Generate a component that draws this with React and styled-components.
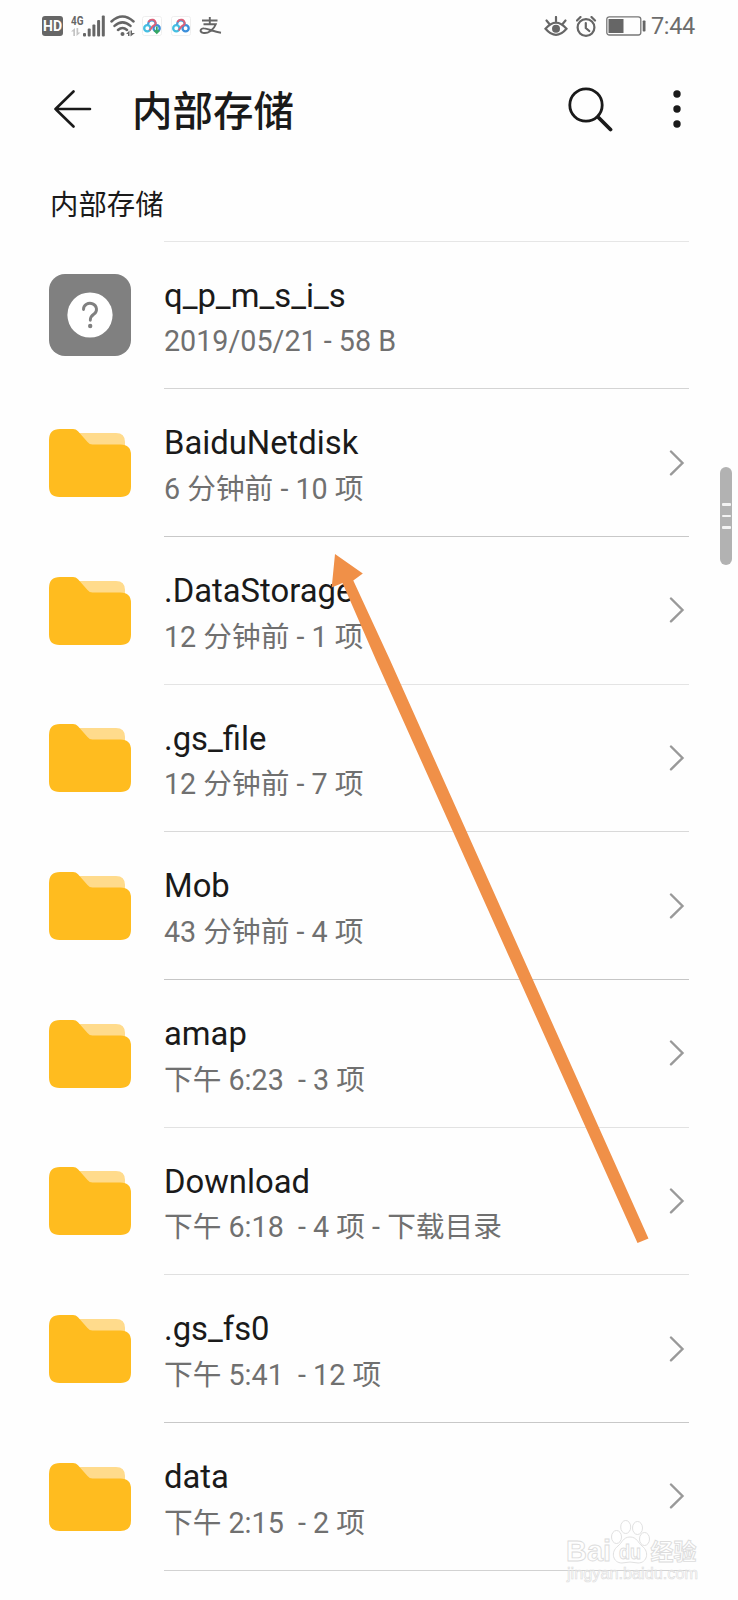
import React from "react";
import styled, { createGlobalStyle } from "styled-components";

const GlobalStyle = createGlobalStyle`
  body {
    margin: 0;
    background: #fefefe;
    font-family: Roboto, "Noto Sans CJK SC", sans-serif;
  }
`;

const Screen = styled("main")`
  position: relative;
  display: flex;
  flex-direction: column;
  width: 738px;
  height: 1600px;
  overflow: hidden;
  background: #fefefe;
  color: #1a1a1a;
`;

const StatusBar = styled("header")`
  display: flex;
  justify-content: space-between;
  align-items: center;
  height: 52px;
  padding: 0 43px 0 42px;
  box-sizing: border-box;
  color: #666;
`;

const StatusGroup = styled("div")`
  display: flex;
  align-items: center;
  gap: ${props => props.gap}px;
`;

const HdBadge = styled("span")`
  width: 21px;
  height: 20px;
  margin-right: 4px;
  border-radius: 3px;
  background: #666;
  color: white;
  font: 700 14px/21px Roboto, sans-serif;
  text-align: center;
`;

const WifiIcon = styled("svg")`
  margin-right: 2px;
`;

const NetdiskIcon = styled("svg")`
  margin-right: 4.5px;
`;

const Clock = styled("span")`
  margin-left: -3px;
  color: #6c6c6c;
  font-size: 23.5px;
  line-height: 28px;
  letter-spacing: -0.3px;
`;

const AppBar = styled("nav")`
  display: flex;
  align-items: center;
  height: 113px;
  padding: 0 57px 0 54px;
`;

const Title = styled("h1")`
  flex: 1;
  margin: 0 0 0 40px;
  padding-top: 7px;
  font-size: 40.5px;
  font-weight: 500;
  line-height: 56px;
`;

const MoreIcon = styled("svg")`
  margin-left: 60px;
`;

const SectionLabel = styled("h2")`
  box-sizing: border-box;
  margin: 0;
  padding: 19.5px 0 0 50px;
  height: 75.5px;
  font-size: 28.4px;
  font-weight: 400;
  line-height: 41px;
`;

const List = styled("ul")`
  margin: 0;
  padding: 0 49px;
  list-style: none;
`;

const Row = styled("li")`
  display: flex;
  align-items: center;
  gap: 33px;
  height: 147.7px;
`;

const IconBox = styled("div")`
  display: flex;
  align-items: center;
  justify-content: center;
  width: 82px;
  height: 82px;
  margin-top: 1.6px;
  border-radius: 16px;
  background: ${props => (props.filled ? "#808080" : "transparent")};
`;

const RowBody = styled("div")`
  display: flex;
  flex: 1;
  align-items: center;
  justify-content: space-between;
  height: 100%;
  box-sizing: border-box;
  padding-right: 4px;
  border-top: 1px solid ${props => props.line};
`;

const Labels = styled("div")`
  padding-top: 7.2px;
`;

const Name = styled("div")`
  font-size: 32.8px;
  line-height: 40px;
`;

const Meta = styled("div")`
  margin-top: 5.6px;
  font-size: 28.7px;
  line-height: 40px;
  color: #707070;
  white-space: pre;
`;

const ListEnd = styled("div")`
  margin-left: 115px;
  border-top: 1px solid #d2d2d2;
`;

const ScrollThumb = styled("div")`
  position: absolute;
  top: 467px;
  right: 6px;
  display: flex;
  flex-direction: column;
  align-items: center;
  justify-content: center;
  gap: 9px;
  width: 12px;
  height: 98px;
  border-radius: 6px;
  background: #b2b2b2;
`;

const Grip = styled("i")`
  width: 9px;
  height: 2.5px;
  border-radius: 1px;
  background: #f3f3f3;
`;

const Overlay = styled("svg")`
  position: absolute;
  top: 0;
  left: 0;
  pointer-events: none;
`;

const files = [
  { name: "q_p_m_s_i_s", meta: "2019/05/21 - 58 B", unknown: true, line: "#e6e6e6" },
  { name: "BaiduNetdisk", meta: "6 分钟前 - 10 项", line: "#d4d4d4" },
  { name: ".DataStorage", meta: "12 分钟前 - 1 项", line: "#c8c8c8" },
  { name: ".gs_file", meta: "12 分钟前 - 7 项", line: "#e4e4e4" },
  { name: "Mob", meta: "43 分钟前 - 4 项", line: "#d9d9d9" },
  { name: "amap", meta: "下午 6:23  - 3 项", line: "#c6c6c6" },
  { name: "Download", meta: "下午 6:18  - 4 项 - 下载目录", line: "#e2e2e2" },
  { name: ".gs_fs0", meta: "下午 5:41  - 12 项", line: "#e0e0e0" },
  { name: "data", meta: "下午 2:15  - 2 项", line: "#c8c8c8" }
];

const Signal = () => (
  <svg width="35" height="32" viewBox="0 -5 35 32" fill="#666">
    <text x="0" y="9.5" fontSize="12.5" fontWeight="700" textLength="12.5" lengthAdjust="spacingAndGlyphs">4G</text>
    <path d="M0 16.500l4-3.500v8H2.300v-4.500zM5.500 13h1.700v4.500h2.300l-4 3.500z" fill="#c4c4c4" />
    <rect x="12" y="18" width="3" height="3.500" rx="1" />
    <rect x="16.700" y="13.500" width="3" height="8" rx="1" />
    <rect x="21.400" y="9.500" width="3" height="12" rx="1" />
    <rect x="26.100" y="5" width="3" height="16.500" rx="1" />
    <rect x="30.800" y="0.500" width="3" height="21" rx="1" />
  </svg>
);

const Wifi = () => (
  <WifiIcon width="26" height="22" viewBox="0 0 26 22" fill="none" stroke="#666" strokeWidth="2.500" strokeLinecap="round">
    <path d="M1.500 6.500Q12.500-3.500 23.500 6.500M4.500 10.900Q12.500 3.900 20.500 10.900M8 15Q12.500 11 17 15" />
    <circle cx="12.500" cy="19" r="2" fill="#666" stroke="none" />
    <path d="M16 19l3.500-3.500V21H18v-2zM20.500 15.500H22V18h3l-4.500 3.500z" fill="#666" stroke="none" />
  </WifiIcon>
);

const Netdisk = ({ download }) => (
  <NetdiskIcon width="20" height="20" viewBox="0 0 20 20" fill="none" strokeWidth="2.300">
    <rect x="0.500" y="0.500" width="19" height="19" rx="2" fill="#fff" stroke="#efefef" strokeWidth="1" />
    <circle cx="5.300" cy="12.300" r="3.100" stroke="#45bfe2" />
    <circle cx="14.600" cy="12.300" r="3.100" stroke="#3b8fdb" />
    <path d="M6.300 8.800a3.700 3.700 0 1 1 7.200 0" stroke="#4b9fdb" />
    <path d="M6.500 6.300a3.600 3.600 0 0 1 7 2L10.500 10.500 7.500 14.500" stroke="#dd6078" strokeWidth="2" />
    {download && <path d="M14.800 10.500v6.500M12.300 14.300l2.500 2.700 2.500-2.700" stroke="#36a862" strokeWidth="1.800" />}
  </NetdiskIcon>
);

const Alipay = () => (
  <svg width="23" height="18" viewBox="0 0 23 18" fill="none" stroke="#666" strokeWidth="1.900">
    <path d="M3 3.500h15.500M10.800 0v7M4.500 7.300h12.300C15 12.500 9 17 4 15.800c-3.800-1-2.800-4.500 1-4.400 4 0 9 3.200 17 4.300" />
  </svg>
);

const Eye = () => (
  <svg width="24" height="21" viewBox="0 0 24 21" fill="none" stroke="#666" strokeWidth="2.200" strokeLinecap="round">
    <path d="M1.500 12.800Q12 0.500 22.500 12.800 12 25 1.500 12.800zM12 5V1M5 7.500L2.500 4.500M19 7.500l2.500-3" />
    <circle cx="12" cy="12.800" r="4" fill="#666" stroke="none" />
  </svg>
);

const Alarm = () => (
  <svg width="22" height="21" viewBox="0 0 22 21" fill="none" stroke="#666" strokeWidth="2.200" strokeLinecap="round">
    <circle cx="10" cy="11.500" r="8.400" />
    <path d="M9.800 7v5l3.500 3M1 4.500l3.500-3.500M19 4.500L15.500 1" />
  </svg>
);

const Battery = () => (
  <svg width="40" height="20" viewBox="0 0 40 20">
    <rect x="0.800" y="0.800" width="34" height="18.200" rx="2.500" fill="none" stroke="#777" strokeWidth="1.300" />
    <rect x="2.500" y="3" width="15" height="14" fill="#666" />
    <rect x="36.700" y="4.500" width="2.800" height="11" rx="0.800" fill="#666" />
  </svg>
);

const FolderIcon = () => (
  <svg width="82" height="68" viewBox="0 0 82 68">
    <path d="M26 4H67Q76 4 76 13V22H36Z" fill="#ffdb8c" />
    <path d="M11 0H24Q27 0 29 2.300L38.500 13Q40.500 15.500 43.500 15.500H71.500Q82 15.500 82 26V57.500Q82 68 71.500 68H10.500Q0 68 0 57.500V11Q0 0 11 0Z" fill="#ffbc1f" />
  </svg>
);

const UnknownIcon = () => (
  <svg width="46" height="46" viewBox="0 0 46 46" fill="none">
    <circle cx="23" cy="23" r="22.600" fill="#fff" />
    <path d="M16.500 17.500a6.500 6 0 1 1 10.500 4.500c-2.500 1.700-3.700 2.700-3.700 6.200" stroke="#808080" strokeWidth="2.900" strokeLinecap="round" />
    <circle cx="23.200" cy="34" r="2.200" fill="#808080" />
  </svg>
);

const Chevron = () => (
  <svg width="16" height="26" viewBox="0 0 16 26" fill="none" stroke="#999" strokeWidth="2.400" strokeLinecap="round">
    <path d="M2 1.500L13.500 13 2 24.300" />
  </svg>
);

const Watermark = () => (
  <g fill="#fff" fillOpacity="0.700" stroke="#dcdcdc" strokeWidth="0.900" fontWeight="700" fontFamily='"Liberation Sans", "Noto Sans CJK SC", sans-serif'>
    <text x="566" y="1561" fontSize="29" textLength="45" lengthAdjust="spacingAndGlyphs">Bai</text>
    <ellipse cx="616.500" cy="1537" rx="5" ry="6.500" />
    <ellipse cx="625.700" cy="1527" rx="5" ry="6.500" />
    <ellipse cx="637.500" cy="1528" rx="5" ry="6.500" />
    <ellipse cx="644.500" cy="1539" rx="5" ry="6.500" />
    <path d="M630 1537c7 0 8 6 12 9 8 6 5 17-4 17-3 0-5-1-8-1s-5 1-8 1c-9 0-12-11-4-17 4-3 5-9 12-9z" />
    <text x="619" y="1558.500" fontSize="20" textLength="22" lengthAdjust="spacingAndGlyphs">du</text>
    <text x="650.500" y="1560" fontSize="23" textLength="46" lengthAdjust="spacingAndGlyphs">经验</text>
    <text x="567" y="1578.500" fontSize="16" fontWeight="400" fillOpacity="0.500" strokeWidth="0.600" textLength="131" lengthAdjust="spacingAndGlyphs">jingyan.baidu.com</text>
  </g>
);

const FileRow = ({ name, meta, unknown, line }) => (
  <Row>
    <IconBox filled={unknown}>{unknown ? <UnknownIcon /> : <FolderIcon />}</IconBox>
    <RowBody line={line}>
      <Labels>
        <Name>{name}</Name>
        <Meta>{meta}</Meta>
      </Labels>
      {!unknown && <Chevron />}
    </RowBody>
  </Row>
);

const App = () => (
  <>
    <GlobalStyle />
    <Screen>
      <StatusBar>
        <StatusGroup gap={4}>
          <HdBadge>HD</HdBadge>
          <Signal />
          <Wifi />
          <Netdisk download />
          <Netdisk />
          <Alipay />
        </StatusGroup>
        <StatusGroup gap={8}>
          <Eye />
          <Alarm />
          <Battery />
          <Clock>7:44</Clock>
        </StatusGroup>
      </StatusBar>
      <AppBar>
        <svg width="38" height="38" viewBox="0 0 38 38" fill="none" stroke="#1a1a1a" strokeWidth="2.600" strokeLinecap="round" strokeLinejoin="round">
          <path d="M36 19H1.500M19.500 1.500L1.500 19l18 17.500" />
        </svg>
        <Title>内部存储</Title>
        <svg width="46" height="46" viewBox="0 0 46 46" fill="none" stroke="#1a1a1a" strokeLinecap="round">
          <circle cx="19" cy="19" r="16.200" strokeWidth="2.800" />
          <path d="M31.500 31.500l12 12" strokeWidth="3.800" />
        </svg>
        <MoreIcon width="8" height="40" viewBox="0 0 8 40" fill="#1a1a1a">
          <circle cx="4" cy="5" r="3.700" />
          <circle cx="4" cy="20" r="3.700" />
          <circle cx="4" cy="35" r="3.700" />
        </MoreIcon>
      </AppBar>
      <SectionLabel>内部存储</SectionLabel>
      <List>
        {files.map(file => (
          <FileRow key={file.name} {...file} />
        ))}
        <ListEnd />
      </List>
      <ScrollThumb>
        <Grip />
        <Grip />
        <Grip />
      </ScrollThumb>
      <Overlay width="738" height="1600" viewBox="0 0 738 1600">
        <path d="M335 554L362.800 573.500 353.300 580.500 390 660 648.500 1238.500 637.500 1243 376 660 342.500 583 331.700 587.500Z" fill="#f09048" />
        <Watermark />
      </Overlay>
    </Screen>
  </>
);

export default App;
